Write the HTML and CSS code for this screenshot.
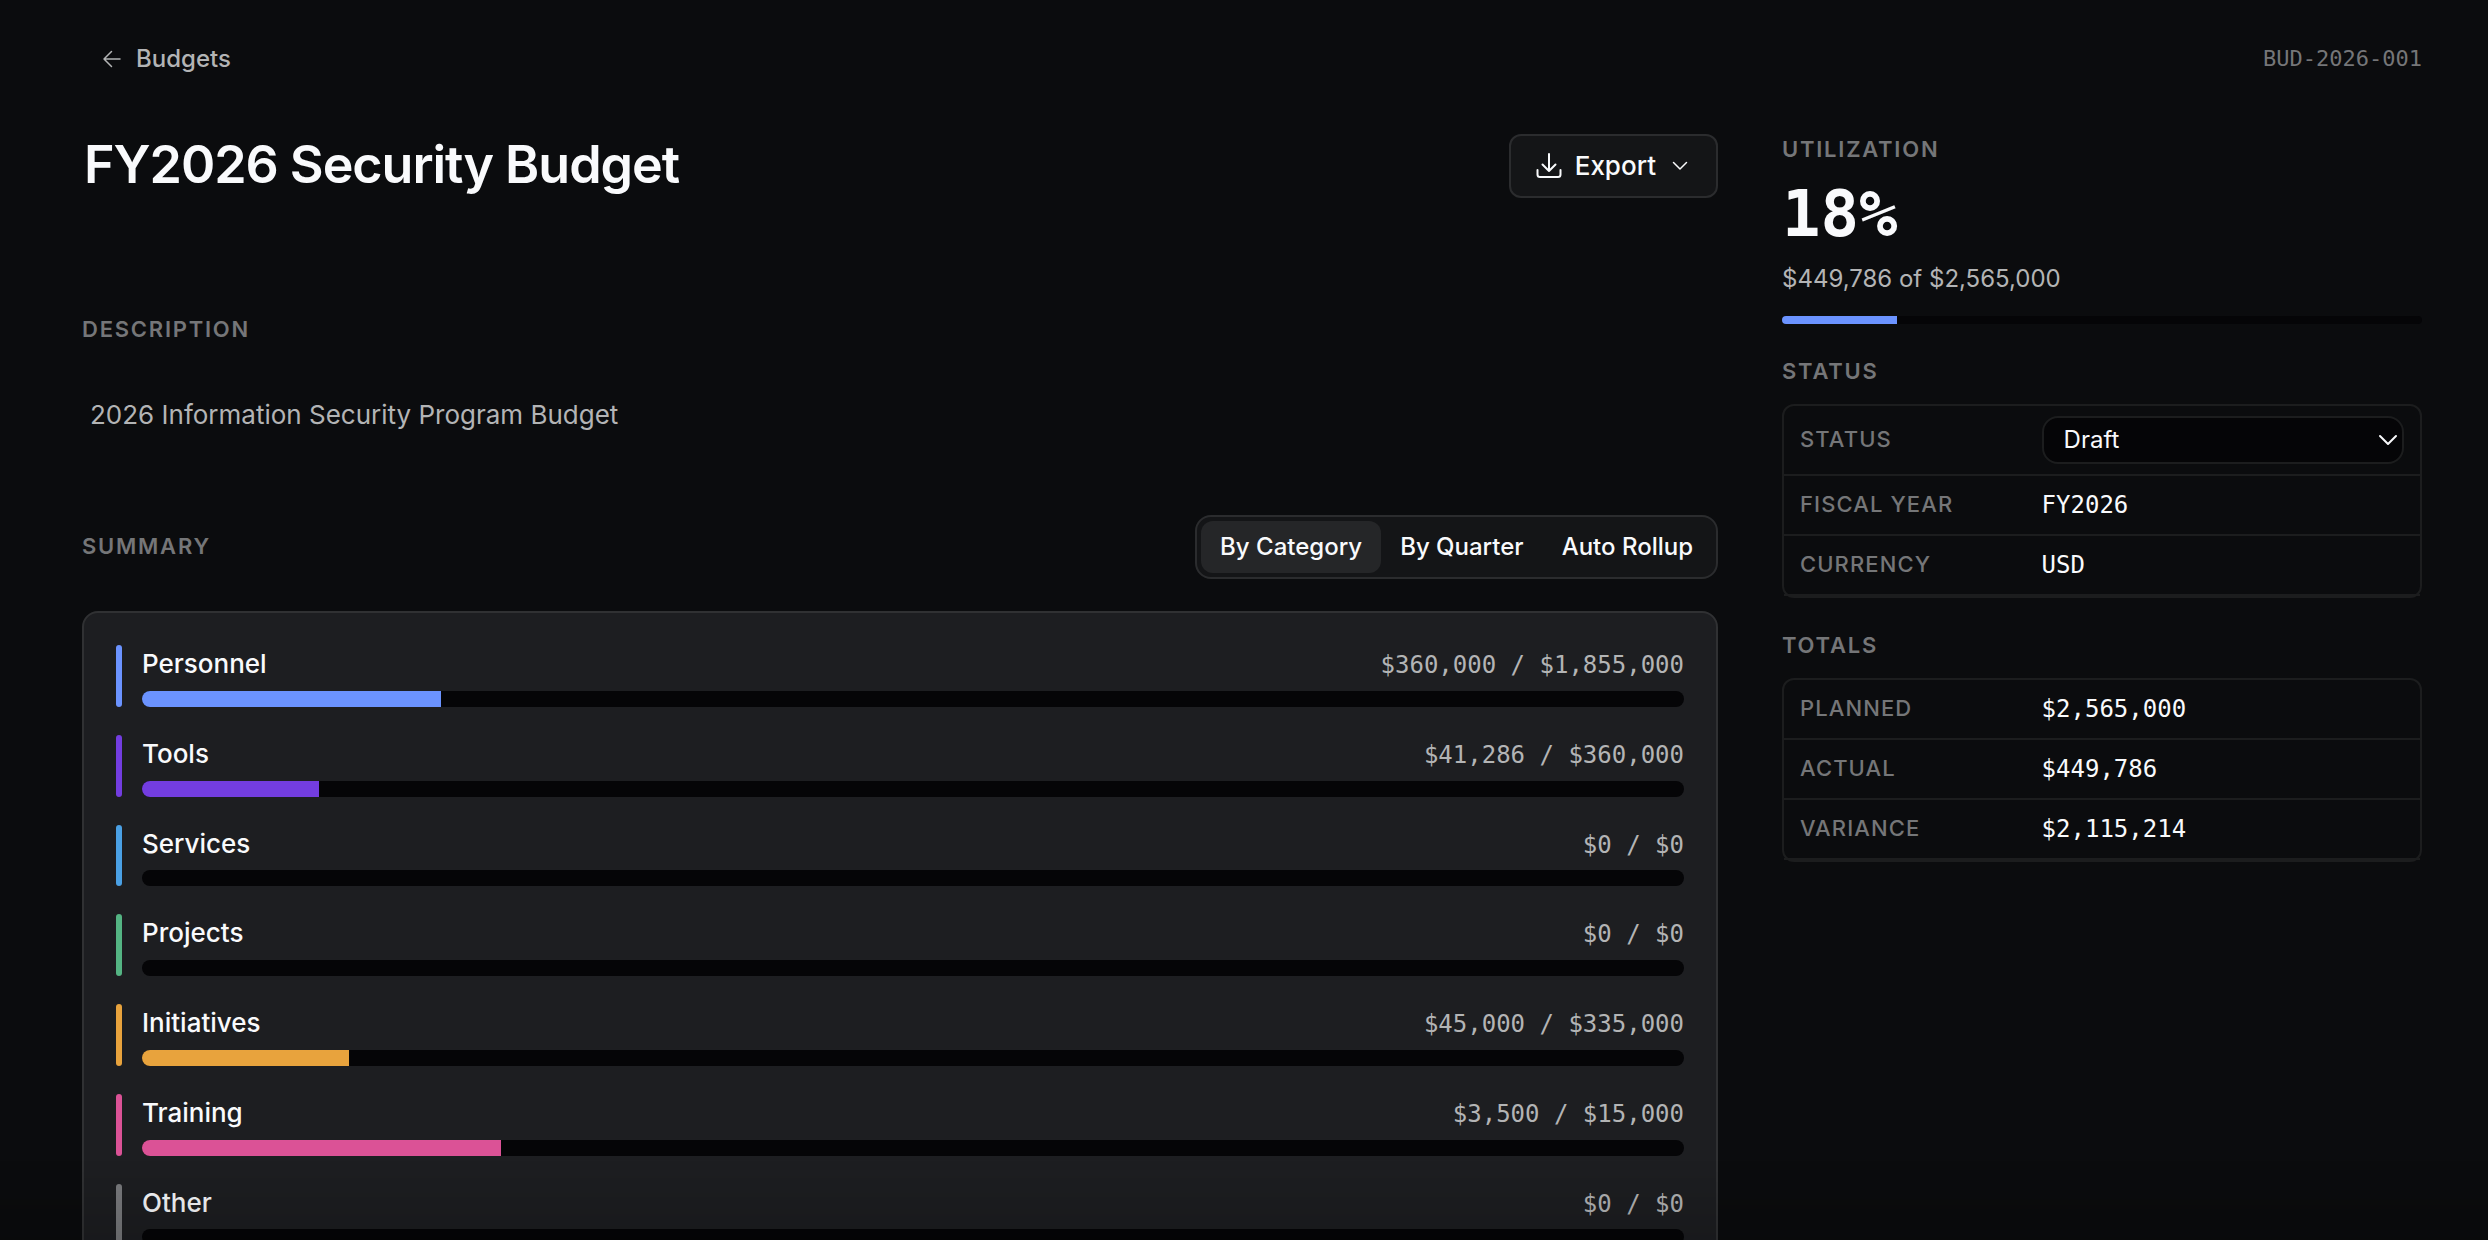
FILE: index.html
```html
<!DOCTYPE html>
<html lang="en">
<head>
    <meta charset="UTF-8">
    <meta name="viewport" content="width=device-width, initial-scale=1.0">
    <title>FY2026 Security Budget</title>
    <link rel="stylesheet" href="styles.css">
</head>
<body>
    <div class="page">
        <header class="topbar">
            <a href="#" class="back">
                <svg class="back-icon" viewBox="0 0 20 20" aria-hidden="true"><path d="M18 10H2.500M9.500 2.500L2 10l7.500 7.500"/></svg>
                Budgets
            </a>
            <span class="code">BUD-2026-001</span>
        </header>

        <div class="layout">
            <main class="main">
                <div class="title-row">
                    <h1>FY2026 Security Budget</h1>
                    <button type="button" class="export">
                        <svg class="export-icon" viewBox="0 0 28 28" aria-hidden="true"><path d="M14 2v17M7.500 12.500L14 19l6.500-6.500M2.500 18v4.500a2.500 2.500 0 0 0 2.500 2.500h18a2.500 2.500 0 0 0 2.500-2.500V18"/></svg>
                        Export
                        <svg class="chevron" viewBox="0 0 20 20" aria-hidden="true"><path d="M3.500 6.500L10 13l6.500-6.500"/></svg>
                    </button>
                </div>

                <section class="section">
                    <h2 class="label">Description</h2>
                    <p class="description">2026 Information Security Program Budget</p>
                </section>

                <section class="section">
                    <div class="summary-head">
                        <h2 class="label">Summary</h2>
                        <div class="tabs">
                            <button type="button" class="tab active">By Category</button>
                            <button type="button" class="tab">By Quarter</button>
                            <button type="button" class="tab">Auto Rollup</button>
                        </div>
                    </div>
                    <div class="card">
                        <div class="row personnel">
                            <div class="row-head"><span>Personnel</span><span class="amount">$360,000 / $1,855,000</span></div>
                            <div class="bar"><div class="fill" style="width: 19.4%"></div></div>
                        </div>
                        <div class="row tools">
                            <div class="row-head"><span>Tools</span><span class="amount">$41,286 / $360,000</span></div>
                            <div class="bar"><div class="fill" style="width: 11.5%"></div></div>
                        </div>
                        <div class="row services">
                            <div class="row-head"><span>Services</span><span class="amount">$0 / $0</span></div>
                            <div class="bar"><div class="fill" style="width: 0%"></div></div>
                        </div>
                        <div class="row projects">
                            <div class="row-head"><span>Projects</span><span class="amount">$0 / $0</span></div>
                            <div class="bar"><div class="fill" style="width: 0%"></div></div>
                        </div>
                        <div class="row initiatives">
                            <div class="row-head"><span>Initiatives</span><span class="amount">$45,000 / $335,000</span></div>
                            <div class="bar"><div class="fill" style="width: 13.4%"></div></div>
                        </div>
                        <div class="row training">
                            <div class="row-head"><span>Training</span><span class="amount">$3,500 / $15,000</span></div>
                            <div class="bar"><div class="fill" style="width: 23.3%"></div></div>
                        </div>
                        <div class="row other">
                            <div class="row-head"><span>Other</span><span class="amount">$0 / $0</span></div>
                            <div class="bar"><div class="fill" style="width: 0%"></div></div>
                        </div>
                    </div>
                </section>
            </main>

            <aside class="sidebar">
                <section class="panel">
                    <h2 class="label">Utilization</h2>
                    <div class="percent">18%</div>
                    <div class="spent">$449,786 of $2,565,000</div>
                    <div class="bar thin"><div class="fill" style="width: 18%"></div></div>
                </section>

                <section class="panel">
                    <h2 class="label">Status</h2>
                    <dl class="props">
                        <div class="prop">
                            <dt><label for="status">Status</label></dt>
                            <dd class="select-wrap">
                                <select id="status">
                                    <option>Draft</option>
                                </select>
                                <svg class="select-arrow" viewBox="0 0 20 20" aria-hidden="true"><path d="M2 6l8 8 8-8"/></svg>
                            </dd>
                        </div>
                        <div class="prop"><dt>Fiscal Year</dt><dd>FY2026</dd></div>
                        <div class="prop"><dt>Currency</dt><dd>USD</dd></div>
                    </dl>
                </section>

                <section class="panel">
                    <h2 class="label">Totals</h2>
                    <dl class="props">
                        <div class="prop"><dt>Planned</dt><dd>$2,565,000</dd></div>
                        <div class="prop"><dt>Actual</dt><dd>$449,786</dd></div>
                        <div class="prop"><dt>Variance</dt><dd>$2,115,214</dd></div>
                    </dl>
                </section>
            </aside>
        </div>
    </div>
</body>
</html>
```

FILE: styles.css
```css
:root {
    --bg: #0b0c0e;
    --inset: #050507;
    --raised: #141517;
    --card: #1d1e21;
    --border: #1c1d1e;
    --border-strong: #2b2c2e;
    --text: #f9fafc;
    --text-2: #b3b4b5;
    --text-3: #757678;
    --accent: #6b93ff;
    --mono: 'DejaVu Sans Mono', 'Liberation Mono', monospace;
}

* {
    margin: 0;
    padding: 0;
    box-sizing: border-box;
}

html {
    height: 100%;
    overflow: hidden;
    background: var(--bg);
}

body {
    font-family: Inter, 'Liberation Sans', sans-serif;
    font-size: 26px;
    line-height: 1.45;
    color: var(--text);
}

/* soft shade along the bottom edge of the window */
body::after {
    content: '';
    position: fixed;
    left: 0;
    right: 0;
    bottom: 0;
    height: 80px;
    background: linear-gradient(transparent, rgba(0, 0, 0, 0.15));
    pointer-events: none;
}

button,
select {
    font: inherit;
    color: inherit;
}

svg {
    fill: none;
    stroke: currentColor;
    stroke-width: 2;
    stroke-linecap: round;
    stroke-linejoin: round;
    flex-shrink: 0;
}

.page {
    padding: 42px 66px 64px 82px;
}

.topbar {
    display: flex;
    justify-content: space-between;
    align-items: center;
    margin-bottom: 57px;
    font-size: 24px;
}

.back {
    display: flex;
    align-items: center;
    gap: 14px;
    padding-left: 20px;
    color: var(--text-2);
    font-weight: 500;
    text-decoration: none;
}

.back-icon {
    width: 20px;
    height: 20px;
    stroke-width: 1.5;
}

.code {
    font-family: var(--mono);
    font-size: 22px;
    color: var(--text-3);
}

.layout {
    display: grid;
    grid-template-columns: minmax(0, 1fr) 640px;
    gap: 64px;
}

.main {
    display: flex;
    flex-direction: column;
    gap: 64px;
}

.title-row {
    display: flex;
    justify-content: space-between;
    align-items: flex-start;
    padding: 0 0 52px 2px;
}

h1 {
    font-size: 52px;
    line-height: 62px;
    font-weight: 600;
    letter-spacing: -0.02em;
}

.export {
    display: flex;
    align-items: center;
    gap: 12px;
    height: 64px;
    padding: 0 24px;
    background: var(--raised);
    border: 2px solid var(--border-strong);
    border-radius: 12px;
    font-weight: 500;
}

.export-icon {
    width: 28px;
    height: 28px;
}

.chevron {
    width: 20px;
    height: 20px;
    margin: 0 2px;
    stroke-width: 1.5;
}

.label {
    font-size: 22px;
    font-weight: 600;
    letter-spacing: 0.08em;
    text-transform: uppercase;
    color: var(--text-3);
}

.description {
    margin-top: 32px;
    padding: 18px 8px;
    color: var(--text-2);
}

.summary-head {
    display: flex;
    justify-content: space-between;
    align-items: center;
    margin-bottom: 32px;
}

.tabs {
    display: flex;
    height: 64px;
    padding: 4px;
    background: var(--raised);
    border: 2px solid var(--border-strong);
    border-radius: 16px;
}

.tab {
    padding: 0 19px;
    background: none;
    border: 0;
    border-radius: 12px;
    font-size: 24px;
    font-weight: 500;
}

.tab.active {
    background: #252628;
}

.card {
    display: flex;
    flex-direction: column;
    gap: 28px;
    padding: 32px;
    background: var(--card);
    border: 2px solid #303133;
    border-radius: 16px;
}

.row {
    display: grid;
    grid-template-columns: 6px minmax(0, 1fr);
    column-gap: 20px;
    row-gap: 8px;
}

.row::before {
    content: '';
    grid-row: 1 / 3;
    background: var(--color);
    border-radius: 3px;
}

.row-head {
    display: flex;
    justify-content: space-between;
    align-items: baseline;
    font-weight: 500;
}

.amount {
    font-family: var(--mono);
    font-size: 24px;
    line-height: 1;
    font-weight: 400;
    color: var(--text-2);
}

.bar {
    height: 16px;
    overflow: hidden;
    background: var(--inset);
    border-radius: 8px;
}

.bar.thin {
    height: 8px;
    border-radius: 4px;
}

.fill {
    height: 100%;
    background: var(--color, var(--accent));
}

.personnel { --color: #6b93ff; }
.tools { --color: #733de0; }
.services { --color: #4aa0e4; }
.projects { --color: #54b483; }
.initiatives { --color: #e8a33d; }
.training { --color: #db5296; }
.other { --color: #797a7d; }

.sidebar {
    display: flex;
    flex-direction: column;
    gap: 32px;
}

.percent {
    margin: 16px 0;
    font-family: var(--mono);
    font-size: 64px;
    line-height: 1;
    font-weight: 700;
}

.spent {
    margin-bottom: 20px;
    font-size: 24px;
    color: var(--text-2);
}

.props {
    margin-top: 16px;
    border: 2px solid var(--border);
    border-radius: 12px;
}

.prop {
    display: grid;
    grid-template-columns: 2fr 3fr;
    align-items: center;
    padding: 10px 16px;
    border-bottom: 2px solid var(--border);
}

.prop dt {
    font-size: 22px;
    font-weight: 500;
    letter-spacing: 0.05em;
    text-transform: uppercase;
    color: var(--text-3);
}

.prop dd {
    font-family: var(--mono);
    font-size: 24px;
    line-height: 38px;
}

.prop .select-wrap {
    position: relative;
    font-family: inherit;
}

.select-wrap select {
    display: block;
    width: 100%;
    height: 48px;
    padding: 0 20px;
    appearance: none;
    background: var(--inset);
    border: 2px solid var(--border);
    border-radius: 16px;
}

.select-arrow {
    position: absolute;
    top: 14px;
    right: 6px;
    width: 20px;
    height: 20px;
    pointer-events: none;
}
```
